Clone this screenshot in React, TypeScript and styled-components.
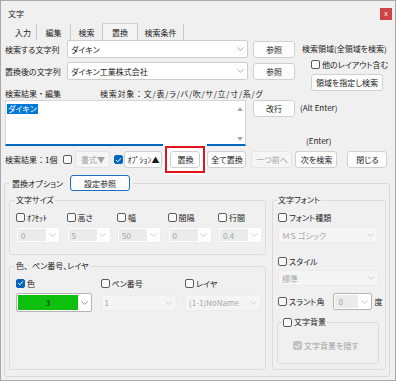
import React from "react";
import styled, { createGlobalStyle } from "styled-components";

const GlobalStyle = createGlobalStyle`
  html, body {
    margin: 0;
    padding: 0;
    background: #ffffff;
  }
  body {
    font-family: "Noto Sans CJK JP", "Noto Sans", sans-serif;
    font-size: 8px;
    color: #1b1b1b;
    font-feature-settings: "palt";
  }
  * {
    box-sizing: border-box;
  }
`;

// full-width punctuation (the dialog font keeps these wide)
const Wide = styled.span`
  font-feature-settings: normal;
`;

const Window = styled.div`
  width: 396px;
  height: 381px;
  background: #f0f0f0;
  border: 1px solid #a9a9a9;
  display: flex;
  flex-direction: column;
  overflow: hidden;
`;

const TitleBar = styled.div`
  height: 22px;
  display: flex;
  align-items: flex-start;
  justify-content: space-between;
  padding: 0 3px 0 7px;
`;

const Title = styled.span`
  line-height: 22px;
  margin-top: 2px;
`;

const CloseButton = styled.span`
  margin-top: 7px;
  width: 12px;
  height: 12px;
  background: #cd4444;
  color: #fff;
  font-size: 7px;
  line-height: 11px;
  text-align: center;
`;

const TabStrip = styled.div`
  height: 17px;
  display: flex;
  padding-left: 9px;
`;

const Tab = styled.div<{ $w: number; $active?: boolean }>`
  width: ${({ $w }) => $w}px;
  height: 17px;
  border-right: 1px solid #c9c9c9;
  border-top: 1px solid ${({ $active }) => ($active ? "#d4d4d4" : "transparent")};
  background: ${({ $active }) => ($active ? "#f4f4f4" : "transparent")};
  display: flex;
  align-items: center;
  justify-content: center;
  padding-top: 1px;
`;

const TopGrid = styled.div`
  display: grid;
  grid-template-columns: 243px 42px 91px;
  grid-template-rows: 22px 22px 16px 46px;
  column-gap: 5px;
  grid-template-areas:
    "f1 b1 side"
    "f2 b2 side"
    "res res side"
    "edit nl keys";
  padding-left: 4px;
`;

const Area = styled.div<{ $area: string }>`
  grid-area: ${({ $area }) => $area};
  min-width: 0;
`;

const FieldRow = styled.div`
  display: flex;
  align-items: center;
  height: 18px;
`;

const FieldLabel = styled.span`
  width: 62px;
  white-space: nowrap;
`;

const Combo = styled.div<{
  $w: number;
  $h?: number;
  $disabled?: boolean;
  $edit?: boolean;
  $strong?: boolean;
}>`
  width: ${({ $w }) => $w}px;
  height: ${({ $h }) => $h ?? 16}px;
  display: flex;
  align-items: center;
  flex-shrink: 0;
  border-radius: 2px;
  border: 1px solid
    ${({ $disabled, $strong }) =>
      $strong ? "#b4b4b4" : $disabled ? "#ececec" : "#cdcdcd"};
  background: ${({ $disabled, $edit }) =>
    $disabled && !$edit ? "#f5f5f5" : "#ffffff"};
  color: ${({ $disabled }) => ($disabled ? "#a5a5a5" : "#1b1b1b")};
  padding: 1px;
  white-space: nowrap;
`;

const ComboText = styled.span<{ $fill?: boolean }>`
  flex: 1;
  height: 100%;
  display: flex;
  align-items: center;
  padding-left: ${({ $fill }) => ($fill ? 3 : 2)}px;
  background: ${({ $fill }) => ($fill ? "#ebebeb" : "transparent")};
  overflow: hidden;
`;

const ColorSwatch = styled.span`
  width: 61px;
  height: 100%;
  background: #0ec00e;
  display: flex;
  align-items: center;
  justify-content: center;
  color: #1b1b1b;
`;

const ChevronBox = styled.span`
  width: 12px;
  display: flex;
  justify-content: center;
  margin-left: auto;
`;

const Chevron = ({ color = "#9a9a9a" }: { color?: string }) => (
  <ChevronBox>
    <svg width="7" height="4" viewBox="0 0 7 4">
      <polyline points="0.5,0.5 3.5,3.3 6.5,0.5" fill="none" stroke={color} strokeWidth="0.8" />
    </svg>
  </ChevronBox>
);

const Button = styled.button<{ $w: number; $h?: number; $disabled?: boolean; $focus?: boolean }>`
  width: ${({ $w }) => $w}px;
  height: ${({ $h }) => $h ?? 17}px;
  flex-shrink: 0;
  padding: 0;
  font: inherit;
  font-size: 8px;
  white-space: nowrap;
  background: ${({ $disabled }) => ($disabled ? "#f5f5f5" : "#fdfdfd")};
  border: 1px solid
    ${({ $focus, $disabled }) => ($focus ? "#1a6fc4" : $disabled ? "#e4e4e4" : "#d0d0d0")};
  border-radius: 3px;
  color: ${({ $disabled }) => ($disabled ? "#a2a2a2" : "#1b1b1b")};
  display: inline-flex;
  align-items: center;
  justify-content: center;
`;

const Side = styled.div`
  grid-area: side;
  display: flex;
  flex-direction: column;
`;

const SideText = styled.span`
  line-height: 18px;
  padding-left: 2px;
  white-space: nowrap;
`;

const SideCheck = styled.div`
  height: 12px;
  display: flex;
  align-items: center;
  margin-left: 11px;
`;

const SideButton = styled(Button)`
  margin: 4px 0 0 11px;
`;

const ResultHeader = styled.div`
  grid-area: res;
  display: grid;
  grid-template-columns: 95px auto;
  align-items: end;
  padding-bottom: 1px;
  white-space: nowrap;
`;

const TargetText = styled.span`
  letter-spacing: 0.75px;
`;

const EditBox = styled.div`
  grid-area: edit;
  width: 241px;
  background: #ffffff;
  border: 1px solid #d6d6d6;
  border-bottom: 2px solid #0067c0;
  display: flex;
`;

const EditText = styled.div`
  flex: 1;
  padding: 2px 1px;
`;

const Selected = styled.span`
  background: #0078d7;
  color: #ffffff;
  line-height: 10px;
  display: inline-block;
  padding: 0 1px;
`;

const ScrollBar = styled.div`
  width: 10px;
  display: flex;
  flex-direction: column;
  justify-content: space-between;
  align-items: center;
  padding: 6px 0 3px;
`;

const Arrow = ({ up }: { up?: boolean }) => (
  <svg width="6" height="4" viewBox="0 0 6 4">
    <polygon points={up ? "0,4 3,0 6,4" : "0,0 3,4 6,0"} fill="#a9a9a9" />
  </svg>
);

const NewLineButton = styled(Button)`
  grid-area: nl;
`;

const Keys = styled.div`
  grid-area: keys;
  display: flex;
  flex-direction: column;
  justify-content: space-between;
  white-space: nowrap;
`;

const KeyHint = styled.span<{ $indent?: number }>`
  line-height: ${({ $indent }) => ($indent ? 10 : 16)}px;
  padding-left: ${({ $indent }) => $indent ?? 0}px;
`;

const ButtonRow = styled.div`
  margin-top: 5px;
  height: 17px;
  display: flex;
  align-items: center;
  padding-left: 4px;
  white-space: nowrap;
`;

const Gap = styled.span<{ $w: number }>`
  width: ${({ $w }) => $w}px;
  flex-shrink: 0;
`;

const RedFrame = styled.span`
  border: 2px solid #e4141b;
  padding: 3px 3px;
  background: #ffffff;
  box-shadow: 0 0 0 2px #ffffff;
  display: inline-flex;
  position: relative;
  z-index: 1;
`;

const CheckWrap = styled.span<{ $disabled?: boolean }>`
  display: inline-flex;
  align-items: center;
  gap: 2px;
  height: 10px;
  white-space: nowrap;
  color: ${({ $disabled }) => ($disabled ? "#a2a2a2" : "#1b1b1b")};
`;

const Box = styled.span<{ $checked?: boolean; $disabled?: boolean }>`
  width: 9px;
  height: 9px;
  flex-shrink: 0;
  border-radius: 2px;
  border: 1px solid
    ${({ $checked, $disabled }) =>
      $checked ? ($disabled ? "#c3c3c3" : "#0067c0") : "#5b5b5b"};
  background: ${({ $checked, $disabled }) =>
    $checked ? ($disabled ? "#c3c3c3" : "#0067c0") : "#fbfbfb"};
  display: inline-flex;
  align-items: center;
  justify-content: center;
`;

const Check = ({
  label,
  checked,
  disabled,
}: {
  label?: React.ReactNode;
  checked?: boolean;
  disabled?: boolean;
}) => (
  <CheckWrap $disabled={disabled}>
    <Box $checked={checked} $disabled={disabled}>
      {checked && (
        <svg width="7" height="6" viewBox="0 0 7 6">
          <polyline points="1,3 2.8,4.8 6,1.2" fill="none" stroke="#fff" strokeWidth="1" />
        </svg>
      )}
    </Box>
    {label && <span>{label}</span>}
  </CheckWrap>
);

const Panel = styled.fieldset`
  flex: 1;
  min-width: 0;
  margin: 7px 5px 3px 3px;
  border: 1px solid #d8d8d8;
  border-radius: 3px;
  display: flex;
  flex-direction: column;
  padding: 0 0 6px 4px;
`;

const PanelHeader = styled.legend`
  display: flex;
  align-items: center;
  height: 16px;
  padding: 0 2px 0 0;
  margin-left: 0;
  white-space: nowrap;
`;

const PanelTitle = styled.span`
  width: 61px;
  padding-left: 3px;
`;

const Groups = styled.div`
  flex: 1;
  display: flex;
  gap: 6px;
  margin-top: 4px;
`;

const LeftColumn = styled.div`
  width: 257px;
  display: flex;
  flex-direction: column;
  gap: 6px;
`;

const Group = styled.fieldset<{ $grow?: boolean; $pad?: number }>`
  margin: 0;
  min-width: 0;
  border: 1px solid #dcdcdc;
  border-radius: 3px;
  padding: 0 0 0 ${({ $pad }) => $pad ?? 6}px;
  flex: ${({ $grow }) => ($grow ? 1 : "none")};
`;

const Legend = styled.legend`
  padding: 0 1px;
  margin-left: -1px;
  line-height: 10px;
  white-space: nowrap;
`;

const CheckGrid = styled.div<{ $cols: number; $w: number; $gap: number }>`
  display: grid;
  grid-template-columns: repeat(${({ $cols }) => $cols}, ${({ $w }) => $w}px);
  column-gap: ${({ $gap }) => $gap}px;
  row-gap: 5px;
  margin-top: 7px;
  align-items: center;
`;

const SizeGroup = styled(Group)`
  height: 60px;
`;

const FontGroup = styled(Group)`
  width: 114px;
  display: flex;
  flex-direction: column;
`;

const Stack = styled.div<{ $top: number; $left?: number }>`
  margin-top: ${({ $top }) => $top}px;
  margin-left: ${({ $left }) => $left ?? 0}px;
  display: flex;
  align-items: center;
`;

const DegreeLabel = styled.span`
  margin-left: 2px;
`;

const BgGroup = styled(Group)`
  width: 102px;
  height: 47px;
  margin: 7px 0 0 -1px;
  padding-left: 5px;
`;

const tabs = [
  { label: "入力", w: 27 },
  { label: "編集", w: 34 },
  { label: "検索", w: 32 },
  { label: "置換", w: 35 },
  { label: "検索条件", w: 46 },
];

const sizeFields = [
  { label: "ｵﾌｾｯﾄ", value: "0" },
  { label: "高さ", value: "5" },
  { label: "幅", value: "50" },
  { label: "間隔", value: "0" },
  { label: "行間", value: "0.4" },
];

export default function App() {
  return (
    <>
      <GlobalStyle />
      <Window>
        <TitleBar>
          <Title>文字</Title>
          <CloseButton>x</CloseButton>
        </TitleBar>

        <TabStrip>
          {tabs.map((t) => (
            <Tab key={t.label} $w={t.w} $active={t.label === "置換"}>
              {t.label}
            </Tab>
          ))}
        </TabStrip>

        <TopGrid>
          <Area $area="f1">
            <FieldRow>
              <FieldLabel>検索する文字列</FieldLabel>
              <Combo $w={181} $h={18}>
                <ComboText>ダイキン</ComboText>
                <Chevron />
              </Combo>
            </FieldRow>
          </Area>
          <Area $area="b1">
            <Button $w={42} style={{ marginTop: 1 }}>参照</Button>
          </Area>
          <Area $area="f2">
            <FieldRow>
              <FieldLabel>置換後の文字列</FieldLabel>
              <Combo $w={181} $h={18}>
                <ComboText>ダイキン工業株式会社</ComboText>
                <Chevron />
              </Combo>
            </FieldRow>
          </Area>
          <Area $area="b2">
            <Button $w={42} style={{ marginTop: 1 }}>参照</Button>
          </Area>

          <Side>
            <SideText>検索領域(全領域を検索)</SideText>
            <SideCheck>
              <Check label="他のレイアウト含む" />
            </SideCheck>
            <SideButton $w={72}>領域を指定し検索</SideButton>
          </Side>

          <ResultHeader>
            <span>
              検索結果<Wide>・</Wide>編集
            </span>
            <TargetText>
              検索対象<Wide>：</Wide>文/表/ラ/バ/吹/サ/立/寸/系/グ
            </TargetText>
          </ResultHeader>

          <EditBox>
            <EditText>
              <Selected>ダイキン</Selected>
            </EditText>
            <ScrollBar>
              <Arrow up />
              <Arrow />
            </ScrollBar>
          </EditBox>
          <NewLineButton $w={42}>改行</NewLineButton>
          <Keys>
            <KeyHint>(Alt Enter)</KeyHint>
            <KeyHint $indent={6}>(Enter)</KeyHint>
          </Keys>
        </TopGrid>

        <ButtonRow>
          <span>
            検索結果<Wide>：</Wide>1個
          </span>
          <Gap $w={6} />
          <Check />
          <Gap $w={3} />
          <Button $w={35} $disabled>書式▼</Button>
          <Gap $w={4} />
          <Check checked />
          <Gap $w={1} />
          <Button $w={38}>ｵﾌﾟｼｮﾝ▲</Button>
          <Gap $w={3} />
          <RedFrame>
            <Button $w={30}>置換</Button>
          </RedFrame>
          <Gap $w={2} />
          <Button $w={39}>全て置換</Button>
          <Gap $w={5} />
          <Button $w={41} $disabled>一つ前へ</Button>
          <Gap $w={3} />
          <Button $w={42}>次を検索</Button>
          <Gap $w={10} />
          <Button $w={40}>閉じる</Button>
        </ButtonRow>

        <Panel>
          <PanelHeader>
            <PanelTitle>置換オプション</PanelTitle>
            <Button $w={60} $h={16} $focus>設定参照</Button>
          </PanelHeader>

          <Groups>
            <LeftColumn>
              <SizeGroup>
                <Legend>文字サイズ</Legend>
                <CheckGrid $cols={5} $w={44} $gap={6.5}>
                  {sizeFields.map((f) => (
                    <Check key={f.label} label={f.label} />
                  ))}
                  {sizeFields.map((f) => (
                    <Combo key={f.label} $w={44} $disabled $edit>
                      <ComboText $fill>{f.value}</ComboText>
                      <Chevron color="#c4c4c4" />
                    </Combo>
                  ))}
                </CheckGrid>
              </SizeGroup>

              <Group $grow>
                <Legend>
                  色<Wide>、</Wide>ペン番号、レイヤ
                </Legend>
                <CheckGrid $cols={3} $w={76} $gap={8.5}>
                  <Check label="色" checked />
                  <Check label="ペン番号" />
                  <Check label="レイヤ" />
                  <Combo $w={76} $h={19} $strong>
                    <ColorSwatch>3</ColorSwatch>
                    <Chevron color="#6f6f6f" />
                  </Combo>
                  <Combo $w={76} $disabled>
                    <ComboText>1</ComboText>
                    <Chevron color="#c4c4c4" />
                  </Combo>
                  <Combo $w={76} $disabled>
                    <ComboText>(1-1)NoName</ComboText>
                    <Chevron color="#c4c4c4" />
                  </Combo>
                </CheckGrid>
              </Group>
            </LeftColumn>

            <FontGroup $pad={5}>
              <Legend>文字フォント</Legend>
              <Stack $top={7}>
                <Check label="フォント種類" />
              </Stack>
              <Stack $top={5}>
                <Combo $w={100} $disabled>
                  <ComboText>ＭＳ ゴシック</ComboText>
                  <Chevron color="#c4c4c4" />
                </Combo>
              </Stack>
              <Stack $top={13}>
                <Check label="スタイル" />
              </Stack>
              <Stack $top={4}>
                <Combo $w={101} $disabled>
                  <ComboText>標準</ComboText>
                  <Chevron color="#c4c4c4" />
                </Combo>
              </Stack>
              <Stack $top={7}>
                <Check label="スラント角" />
                <Gap $w={9} />
                <Combo $w={39} $h={17} $strong $disabled $edit>
                  <ComboText $fill>0</ComboText>
                  <Chevron color="#b4b4b4" />
                </Combo>
                <DegreeLabel>度</DegreeLabel>
              </Stack>
              <BgGroup>
                <Legend>
                  <Check label="文字背景" />
                </Legend>
                <Stack $top={12} $left={10}>
                  <Check label="文字背景を隠す" checked disabled />
                </Stack>
              </BgGroup>
            </FontGroup>
          </Groups>
        </Panel>
      </Window>
    </>
  );
}
